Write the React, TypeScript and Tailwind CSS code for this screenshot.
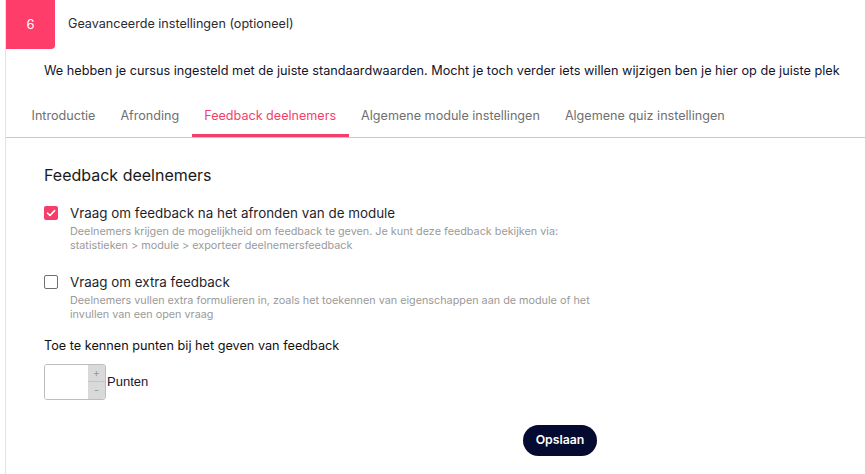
import React from 'react';

const tabs = [
  'Introductie',
  'Afronding',
  'Feedback deelnemers',
  'Algemene module instellingen',
  'Algemene quiz instellingen',
];

interface OptionProps {
  checked: boolean;
  label: string;
  description: string;
}

const Option: React.FC<OptionProps> = ({ checked, label, description }) => {
  return (
    <div className="flex items-start gap-[12px]">
      {checked ? (
        <div className="mt-[1px] flex h-[14px] w-[14px] shrink-0 items-center justify-center rounded-[2px] bg-[#f43f6b]">
          <svg width="10" height="10" viewBox="0 0 10 10" fill="none">
            <path d="M1.5 5.2 L4 7.5 L8.6 2.6" stroke="white" strokeWidth="1.6" strokeLinecap="round" strokeLinejoin="round" />
          </svg>
        </div>
      ) : (
        <div className="mt-[1px] h-[14px] w-[14px] shrink-0 rounded-[2px] border border-[#6f6f6f] bg-white" />
      )}
      <div>
        <p className="text-[13.4px] leading-[16px] text-[#1f1f2b]">{label}</p>
        <p className="mt-[4px] max-w-[540px] text-[10.8px] leading-[14px] text-[#9a9a9a]">{description}</p>
      </div>
    </div>
  );
};

const App: React.FC = () => {
  return (
    <div className="h-[474px] w-[865px] overflow-hidden bg-white font-['Inter',sans-serif]">
      <div className="ml-[5px] h-full border-l border-[#e3e3e3]">
        <div className="flex items-center">
          <div className="flex h-[49px] w-[49px] items-center justify-center rounded-br-[4px] bg-[#ff3d6b] text-[13px] text-white">
            6
          </div>
          <span className="ml-[13px] text-[12.6px] text-[#2b2b33]">Geavanceerde instellingen (optioneel)</span>
        </div>

        <p className="ml-[38px] mt-[13px] text-[12.7px] leading-[18px] text-[#14142b]">
          We hebben je cursus ingesteld met de juiste standaardwaarden. Mocht je toch verder iets willen wijzigen ben je hier op de juiste plek
        </p>

        <div className="mt-[25px] flex border-b border-[#c9c9c9] pl-[13px]">
          {tabs.map((tab) => {
            const active = tab === 'Feedback deelnemers';
            return (
              <div
                key={tab}
                className={
                  active
                    ? 'border-b-[3px] border-[#f43f6b] px-[12.5px] pb-[8px] pt-[2px] text-[12.6px] text-[#f43f6b]'
                    : 'border-b-[3px] border-transparent px-[12.5px] pb-[8px] pt-[2px] text-[12.6px] text-[#707070]'
                }
              >
                {tab}
              </div>
            );
          })}
        </div>

        <div className="pl-[38px] pt-[27px]">
          <h2 className="text-[16px] leading-[20px] text-[#1a1a1a]">Feedback deelnemers</h2>

          <div className="mt-[20px] flex flex-col gap-[21px]">
            <Option
              checked
              label="Vraag om feedback na het afronden van de module"
              description="Deelnemers krijgen de mogelijkheid om feedback te geven. Je kunt deze feedback bekijken via: statistieken > module > exporteer deelnemersfeedback"
            />
            <Option
              checked={false}
              label="Vraag om extra feedback"
              description="Deelnemers vullen extra formulieren in, zoals het toekennen van eigenschappen aan de module of het invullen van een open vraag"
            />
          </div>

          <p className="mt-[16px] text-[12.7px] leading-[16px] text-[#111]">Toe te kennen punten bij het geven van feedback</p>

          <div className="mt-[10px] flex items-center">
            <div className="flex h-[36px] w-[62px] overflow-hidden rounded-[3px] border border-[#bdbdbd]">
              <div className="flex-1 bg-white" />
              <div className="flex w-[17px] flex-col bg-[#d9d9d9] text-[11px] leading-none text-[#9a9a9a]">
                <div className="flex flex-1 items-center justify-center border-b border-[#c4c4c4]">+</div>
                <div className="flex flex-1 items-center justify-center">-</div>
              </div>
            </div>
            <span className="ml-[1px] font-['Liberation_Sans',Arial,sans-serif] text-[13px] text-[#1a1a2e]">Punten</span>
          </div>

          <div className="mt-[25px] flex justify-center pl-[211px]">
            <button className="h-[31px] rounded-full bg-[#050a30] px-[13px] text-[12.3px] font-semibold text-white">
              Opslaan
            </button>
          </div>
        </div>
      </div>
    </div>
  );
};

export default App;
